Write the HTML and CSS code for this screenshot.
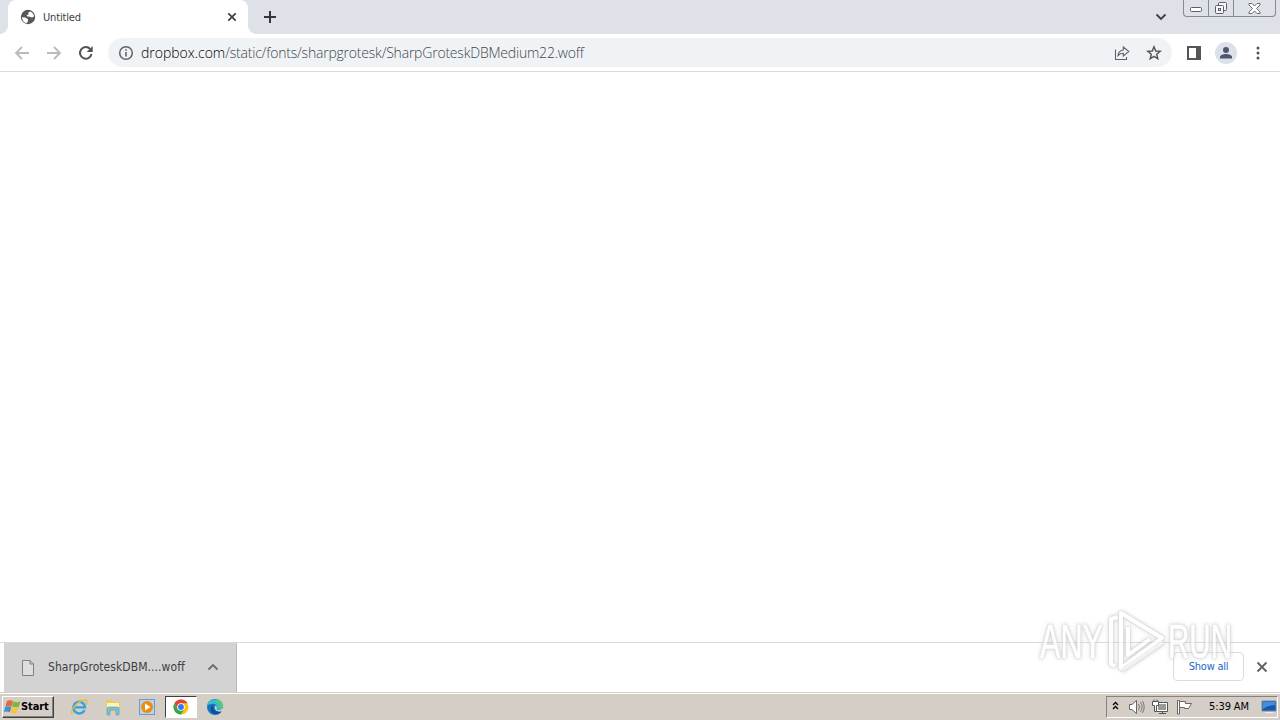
FILE: index.html
```html
<!DOCTYPE html>
<html lang="en">
<head>
    <meta charset="UTF-8">
    <meta name="viewport" content="width=device-width, initial-scale=1.0">
    <title>Untitled</title>
    <link rel="stylesheet" href="styles.css">
</head>
<body>
    <header class="tab-strip">
        <div class="tab">
            <svg class="globe" width="16" height="16" viewBox="0 0 16 16">
                <circle cx="8" cy="8" r="7.2" fill="#55585c"/>
                <path d="M2 8.2 5.2 8.4 7.8 10 8 12.2 6.6 14.2C3.8 13.5 2 11.3 2 8.2ZM8.4 3.4 10.4 2.4C12.6 3.4 14 5.4 14 7.6L12 8.4 10 7.8 7.6 7.6 6.4 6.4 8.4 5.4Z" fill="#fff"/>
            </svg>
            <span class="tab-title">Untitled</span>
            <svg class="tab-close" width="10" height="10" viewBox="0 0 10 10"><path d="M1.3 1.3 8.7 8.7M8.7 1.3 1.3 8.7" stroke="#3c4043" stroke-width="1.7"/></svg>
        </div>
        <svg class="new-tab" width="12" height="12" viewBox="0 0 12 12"><path d="M6 0V12M0 6H12" stroke="#35363a" stroke-width="2"/></svg>
        <svg class="tab-search" width="12" height="8" viewBox="0 0 12 8"><path d="M1.5 1.5 6 6 10.5 1.5" fill="none" stroke="#3c4043" stroke-width="1.8"/></svg>
        <div class="window-buttons">
            <span class="minimize"><svg width="13" height="6" viewBox="0 0 13 6"><rect x=".5" y=".5" width="11" height="4" rx="1" fill="#fff" stroke="#5a5e68"/></svg></span>
            <span class="restore"><svg width="14" height="14" viewBox="0 0 14 14" fill="#f5f6f8" stroke="#5a5e68"><rect x="4.5" y="1.5" width="8" height="8" rx="1"/><rect x="1.5" y="4.5" width="8" height="8" rx="1"/><rect x="4.5" y="7.5" width="2" height="2"/></svg></span>
            <span class="close"><svg width="13" height="11" viewBox="0 0 13 11"><path d="M1 .5H4L6.5 3 9 .5H12V2L8.5 5.5 12 9V10.5H9L6.5 8 4 10.5H1V9L4.5 5.5 1 2Z" fill="#fff" stroke="#5a5e68" stroke-width=".9"/></svg></span>
        </div>
    </header>

    <nav class="toolbar">
        <svg class="nav-icon" width="16" height="16" viewBox="0 0 16 16"><path d="M15 8H2.5M8 2 2 8 8 14" fill="none" stroke="#b9bbbe" stroke-width="1.8"/></svg>
        <svg class="nav-icon" width="16" height="16" viewBox="0 0 16 16"><path d="M1 8H13.5M8 2 14 8 8 14" fill="none" stroke="#b9bbbe" stroke-width="1.8"/></svg>
        <svg class="nav-icon" width="16" height="16" viewBox="0 0 16 16"><path d="M13.5 9A5.8 5.8 0 1 1 12.3 4.2" fill="none" stroke="#505357" stroke-width="2"/><path d="M14.7 1V7H8.7Z" fill="#505357"/></svg>
        <div class="address-bar">
            <svg width="16" height="16" viewBox="0 0 16 16"><circle cx="8" cy="8" r="6.3" fill="none" stroke="#5f6368" stroke-width="1.5"/><path d="M8 7V11.5M8 4.2V5.8" stroke="#5f6368" stroke-width="1.6"/></svg>
            <div class="url"><span class="host">dropbox.com</span><span class="path">/static/fonts/sharpgrotesk/SharpGroteskDBMedium22.woff</span></div>
            <svg width="16" height="16" viewBox="0 0 16 16" fill="none" stroke="#5f6368" stroke-width="1.1"><path d="M1.5 4.5V14.5H12.5V12M4 10.5C4.5 7 6.3 5.2 9.3 5V2L14.8 6.6 9.3 11V8.2C7 8.2 5.4 9 4 10.5Z"/></svg>
            <svg class="star" width="16" height="16" viewBox="0 0 16 16"><path d="M8 1.8 9.7 6 14.2 6.3 10.7 9.2 11.8 13.8 8 11.3 4.2 13.8 5.3 9.2 1.8 6.3 6.3 6Z" fill="none" stroke="#505458" stroke-width="1.4"/></svg>
        </div>
        <svg class="side-panel" width="14" height="14" viewBox="0 0 14 14"><path d="M0 0H14V14H0ZM2 2V12H9V2Z" fill="#55565a" fill-rule="evenodd"/></svg>
        <div class="avatar"><svg width="14" height="14" viewBox="0 0 14 14" fill="#4c566d"><circle cx="7" cy="4" r="3"/><path d="M1 12.5V11C1 9 4.5 8 7 8S13 9 13 11V12.5Z"/></svg></div>
        <svg class="menu" width="4" height="14" viewBox="0 0 4 14" fill="#505357"><circle cx="2" cy="2" r="1.5"/><circle cx="2" cy="7" r="1.5"/><circle cx="2" cy="12" r="1.5"/></svg>
    </nav>

    <main class="page"></main>

    <section class="download-shelf">
        <div class="download-item">
            <svg width="14" height="16" viewBox="0 0 14 16"><path d="M1.5.5H9L12.5 4V15.5H1.5ZM9 .5V4H12.5" fill="#dedede" stroke="#808080"/></svg>
            <span class="file-name">SharpGroteskDBM....woff</span>
            <svg class="chevron" width="12" height="8" viewBox="0 0 12 8"><path d="M1.5 6.5 6 2 10.5 6.5" fill="none" stroke="#6a6c6f" stroke-width="1.8"/></svg>
        </div>
        <button class="show-all">Show all</button>
        <svg class="shelf-close" width="12" height="12" viewBox="0 0 12 12"><path d="M1.5 1.5 10.5 10.5M10.5 1.5 1.5 10.5" stroke="#5f6368" stroke-width="1.9"/></svg>
    </section>

    <footer class="taskbar">
        <div class="start">
            <svg width="17" height="16" viewBox="0 0 17 16">
                <path d="M3 2Q6 .5 9 2L7.5 7.4Q5 6 1.5 7.4Z" fill="#ec6535"/>
                <path d="M9.4 2.3Q12.5 4 16.6 2.2L14.8 7.7Q11.4 9 8 7.6Z" fill="#78b843"/>
                <path d="M1.2 7.8Q4.4 6.5 7.4 7.8L5.9 13.2Q3 11.7 0 13.2Z" fill="#3f8ed8"/>
                <path d="M7.9 8.1Q11 9.8 14.4 8.3L12.9 13.8Q9.5 15.3 6.4 13.6Z" fill="#f8c43a"/>
            </svg>
            <span>Start</span>
        </div>
        <div class="quick-launch">
            <span class="task"><svg width="18" height="18" viewBox="0 0 18 18"><path d="M14.5 12A5.8 5.8 0 1 1 15 9.4H5" fill="none" stroke="#34a2df" stroke-width="2.4"/><path d="M2.5 16C-1 13 8 2 15 2C17.5 2 17 4.5 16 6.5" fill="none" stroke="#edb735" stroke-width="1.3"/></svg></span>
            <span class="task"><svg width="18" height="18" viewBox="0 0 18 18"><path d="M2 2H8L9 4H16V14H2Z" fill="#edcb60"/><path d="M3 5H15V9H3Z" fill="#fff4b5"/><path d="M3 17V11Q3 9 5 9H13Q15 9 15 11V17H12V12H6V17Z" fill="#75bfdf" stroke="#4b9fc6" stroke-width=".6"/></svg></span>
            <span class="task"><svg width="18" height="18" viewBox="0 0 18 18"><rect x="1.5" y="1.5" width="15" height="15" fill="#b8d4e9" stroke="#6b9cc4"/><circle cx="9" cy="9" r="6" fill="#ef8a19"/><path d="M7 5.5 12.5 9 7 12.5Z" fill="#fff"/></svg></span>
            <span class="task active"><svg width="16" height="16" viewBox="0 0 16 16"><circle cx="8" cy="8" r="7.5" fill="#fbc116"/><path d="M1.5 4.2A7.5 7.5 0 0 1 14.5 4.2H8L4.7 9.8Z" fill="#e64235"/><path d="M1.5 4.2A7.5 7.5 0 0 0 8 15.5L11.3 9.9H4.7Z" fill="#32a852"/><circle cx="8" cy="8" r="3.8" fill="#fff"/><circle cx="8" cy="8" r="2.9" fill="#3478e5"/></svg></span>
            <span class="task"><svg width="18" height="18" viewBox="0 0 18 18"><circle cx="9" cy="9" r="8" fill="#1476ba"/><path d="M1 8C2 0 14-1 17 7C18 11 14 13 11 11C12 8 9 5 6 6C3 6 1.5 7 1 8Z" fill="#36bfca"/><path d="M11 1.3C15 2 18 6 17 9C16 11 14 11 13 11C15 7 13 4 9 3Z" fill="#58c978"/><path d="M7 7C6 12 10 15 15 13.7C13 16.5 8 17 5.5 14C4 12 4.5 8 7 7Z" fill="#0d4d9c"/><path d="M9.5 7.6C12 9 10 11 11.5 11.8C13 12.5 16 11.5 17.5 9.5V13L14 13.6C9.5 13.8 7.5 10 9.5 7.6Z" fill="#d5cec7"/></svg></span>
        </div>
        <div class="tray">
            <svg class="tray-more" width="7" height="9" viewBox="0 0 7 9"><path d="M1 4 3.5 1.5 6 4M1 8 3.5 5.5 6 8" fill="none" stroke="#000" stroke-width="1.3"/></svg>
            <svg class="volume" width="17" height="16" viewBox="0 0 17 16"><path d="M1.5 5.5H4L8.5 1.5V14.5L4 10.5H1.5Z" fill="#fff" stroke="#666"/><path d="M10.5 5Q12.5 8 10.5 11M12.5 3.3Q15.7 8 12.5 12.7M14.4 2Q18 8 14.4 14" fill="none" stroke="#777"/></svg>
            <svg class="network" width="17" height="16" viewBox="0 0 17 16"><rect x="5.5" y="4.5" width="9" height="7" fill="#999" stroke="#fff"/><path d="M6 3.5H15.5V12.5H5M7 14.5H14M10.5 12.5V14.5" fill="none" stroke="#555"/><path d="M.5 2.5H6.5V6.5H4.5V12.5H2.5V6.5H.5ZM2 .5V2.5M5 .5V2.5" fill="#fff" stroke="#555"/></svg>
            <svg class="flag" width="17" height="16" viewBox="0 0 17 16"><path d="M1.5 1.5H3.5V15H1.5Z" fill="#fff" stroke="#666"/><path d="M3.5 2.5H9.5V4.5H15.5L12.5 9.5H8.5V8.5H3.5Z" fill="#fff" stroke="#666"/></svg>
            <span class="clock">5:39 AM</span>
            <svg class="desktop" width="16" height="14" viewBox="0 0 16 14"><path d="M1 1H15V11H1Z" fill="#1758ae" stroke="#718dab"/><path d="M2 2H14V5Q7 5 2 9Z" fill="#3d91df"/><path d="M4 12.5H12" stroke="#ededed"/></svg>
        </div>
    </footer>

    <svg class="watermark" width="216" height="76" viewBox="0 0 216 76">
        <g class="watermark-text">
            <text x="6" y="52" textLength="63" lengthAdjust="spacingAndGlyphs">ANY</text>
            <text x="134" y="52" textLength="64" lengthAdjust="spacingAndGlyphs">RUN</text>
        </g>
        <g class="watermark-logo">
            <path d="M84 11 77 13V58L81 60M87 7 128 32 87 62ZM94 21V49L116 33"/>
            <path class="edge" d="M88 64 129 36"/>
        </g>
    </svg>
</body>
</html>
```
FILE: styles.css
```css
* {
    box-sizing: border-box;
}
body {
    margin: 0;
    height: 100vh;
    display: flex;
    flex-direction: column;
    overflow: hidden;
    background: #fff;
    font-family: "DejaVu Sans Condensed", "DejaVu Sans", sans-serif;
    font-size: 11px;
    color: #3c4043;
}
svg {
    display: block;
    flex-shrink: 0;
}

/* tabs */
.tab-strip {
    display: flex;
    height: 34px;
    flex-shrink: 0;
    padding-left: 8px;
    background: #dee1e8;
}
.tab {
    position: relative;
    display: flex;
    align-items: center;
    width: 240px;
    padding: 0 11px 0 12px;
    background: #fff;
    border-radius: 8px 8px 0 0;
}
.tab::before,
.tab::after {
    content: "";
    position: absolute;
    bottom: 0;
    width: 8px;
    height: 8px;
}
.tab::before {
    left: -8px;
    background: radial-gradient(circle at 0 0, transparent 7.5px, #fff 8px);
}
.tab::after {
    right: -8px;
    background: radial-gradient(circle at 100% 0, transparent 7.5px, #fff 8px);
}
.tab-title {
    margin-left: 7px;
    letter-spacing: -0.15px;
}
.tab-close {
    margin-left: auto;
}
.new-tab {
    margin: 11px 0 0 16px;
}
.tab-search {
    margin: 13px 16px 0 auto;
}
.window-buttons {
    display: flex;
    width: 93px;
    height: 17px;
    margin-right: 4px;
    border: 1px solid #858994;
    border-top: 0;
    border-radius: 0 0 4px 4px;
}
.window-buttons span {
    display: flex;
    justify-content: center;
    align-items: center;
}
.minimize {
    width: 24px;
    padding-top: 4px;
}
.restore {
    width: 26px;
    border-left: 1px solid #858994;
    border-right: 1px solid #858994;
}
.close {
    flex: 1;
}

/* toolbar */
.toolbar {
    display: flex;
    align-items: center;
    height: 38px;
    flex-shrink: 0;
    padding: 0 20px 0 14px;
    border-bottom: 1px solid #d9dadd;
}
.nav-icon {
    margin-right: 16px;
}
.address-bar {
    display: flex;
    align-items: center;
    width: 1064px;
    height: 29px;
    margin-left: -2px;
    padding: 0 10px;
    background: #f0f3f5;
    border-radius: 15px;
}
.url {
    flex: 1;
    margin-left: 7px;
    font-family: "Open Sans", sans-serif;
    font-size: 14px;
    line-height: 20px;
    font-weight: 300;
    white-space: nowrap;
}
.host {
    color: #000;
    letter-spacing: -0.02px;
}
.path {
    color: #3f464c;
    letter-spacing: -0.21px;
}
.star {
    margin-left: 16px;
}
.side-panel {
    margin-left: 15px;
}
.avatar {
    display: flex;
    align-items: center;
    justify-content: center;
    width: 22px;
    height: 22px;
    margin-left: 14px;
    background: #dce0e8;
    border-radius: 50%;
}
.menu {
    margin-left: auto;
}
.page {
    flex: 1;
}

/* downloads */
.download-shelf {
    display: flex;
    align-items: center;
    height: 50px;
    flex-shrink: 0;
    padding: 0 12px 0 4px;
    border-top: 1px solid #d9dadb;
}
.download-item {
    display: flex;
    align-items: center;
    width: 233px;
    height: 49px;
    padding: 0 17px 0 17px;
    background: #d3d3d3;
    border-right: 1px solid #bababa;
}
.file-name {
    margin-left: 13px;
    padding-bottom: 2px;
    font-size: 12px;
    letter-spacing: 0.07px;
    white-space: nowrap;
}
.chevron {
    margin-left: auto;
    margin-bottom: 2px;
}
.show-all {
    width: 71px;
    height: 29px;
    margin: 0 0 2px auto;
    padding: 0 0 1px;
    border: 1px solid #dadce0;
    border-radius: 4px;
    background: #fff;
    color: #1a68c7;
    font-family: inherit;
    font-size: 11px;
    letter-spacing: -0.25px;
}
.shelf-close {
    margin: 0 0 1px 12px;
}

/* taskbar */
.taskbar {
    display: flex;
    align-items: center;
    height: 28px;
    flex-shrink: 0;
    padding: 1px 2px 1px;
    background: #d5cec7;
    border-top: 1px solid #d5cec7;
    box-shadow: inset 0 1px #fff;
}
.start {
    display: flex;
    align-items: center;
    width: 52px;
    height: 22px;
    padding-left: 1px;
    border: 1px solid;
    border-color: #fff #404040 #404040 #fff;
    box-shadow: inset -1px -1px #85817c;
    color: #000;
    font-weight: bold;
    letter-spacing: -0.1px;
}
.quick-launch {
    display: flex;
    gap: 2px;
    margin-left: 9px;
}
.task {
    display: flex;
    align-items: center;
    justify-content: center;
    width: 32px;
    height: 22px;
}
.task.active {
    background: #fff;
    border: 1px solid;
    border-color: #404040 #fff #fff #404040;
}
.tray {
    display: flex;
    align-items: center;
    width: 172px;
    height: 22px;
    margin-left: auto;
    padding-left: 5px;
    border: 1px solid;
    border-color: #85817c #fff #fff #85817c;
    color: #000;
}
.tray-more {
    margin-bottom: 2px;
}
.volume {
    margin-left: 9px;
}
.network,
.flag {
    margin-left: 7px;
}
.clock {
    margin-left: 16px;
    letter-spacing: -0.1px;
    white-space: nowrap;
}
.desktop {
    margin-left: auto;
}

.watermark {
    position: absolute;
    left: 1034px;
    top: 606px;
    pointer-events: none;
    opacity: 0.75;
    filter: drop-shadow(0 0 1px #bbb) drop-shadow(0 0 2px #ccc);
}
.watermark-text {
    fill: #fff;
    stroke: #fff;
    stroke-width: 0.6px;
    font-family: "Liberation Sans", sans-serif;
    font-size: 49px;
}
.watermark-logo {
    fill: none;
    stroke: #fff;
    stroke-width: 4px;
    stroke-linejoin: round;
}
.edge {
    stroke: #eee;
}
```
